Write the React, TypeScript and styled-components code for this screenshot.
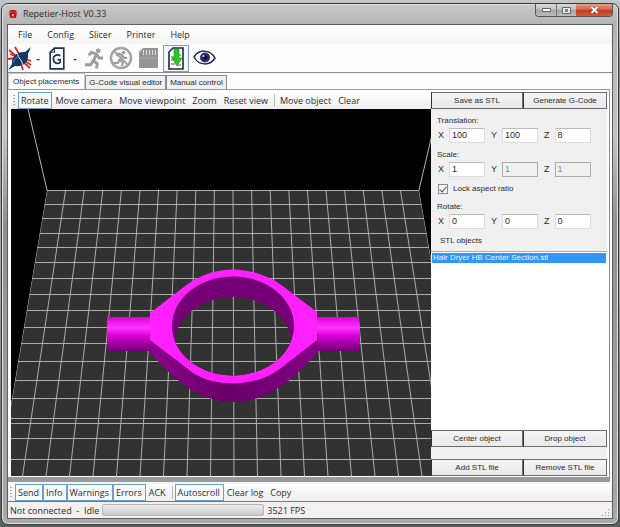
import React, { useState } from 'react';
import styled, { createGlobalStyle, css } from 'styled-components';

const uiFont = '"Open Sans", "Noto Sans", sans-serif';
const formFont = '"Liberation Sans", Arial, sans-serif';

const GlobalStyle = createGlobalStyle`
  *, *::before, *::after { box-sizing: border-box; }
  html { background: linear-gradient(#c3c7ca 0, #8c8c8c 60px, #aaaaaa 50%, #56605c 100%); }
  body { margin: 0; font-family: ${uiFont}; font-size: 10px; color: #2b2b2b; }
  button, input { font: inherit; color: inherit; margin: 0; }
`;

const Desktop = styled.div`
  min-height: 100vh;
  padding: 3px 1px 2px;
  display: flex;
`;

const Window = styled.div`
  flex: 1;
  min-width: 0;
  display: flex;
  flex-direction: column;
  border: 1px solid #3a3a3a;
  border-radius: 7px;
  padding: 0 5px 5px;
  box-shadow: inset 0 0 0 1px #e2e2e2;
  background: linear-gradient(#c9c9c9 0, #b3b3b3 22px, #c4c4c4 130px, #8f8f8f 220px, #a9a9a9 100%);
`;

const TitleBar = styled.header`
  display: flex;
  align-items: flex-start;
  height: 20px;
`;

const Title = styled.h1`
  flex: 1;
  display: flex;
  align-items: center;
  gap: 5px;
  margin: 0;
  padding-left: 1px;
  height: 19px;
  font-size: 9px;
  font-weight: 400;
  color: #2b2b2b;
`;

const Caption = styled.div`
  display: flex;
  border: 1px solid #555;
  border-top: 0;
  border-radius: 0 0 4px 4px;
  overflow: hidden;
`;

const CaptionButton = styled.button<{ $close?: boolean }>`
  display: flex;
  align-items: center;
  justify-content: center;
  width: ${p => (p.$close ? 36 : 20)}px;
  height: 12px;
  padding: 0;
  border: 0;
  border-left: ${p => (p.$close ? '0' : '1px solid #777')};
  background: ${p =>
    p.$close
      ? 'linear-gradient(#e2a08e 0, #d4664b 45%, #bd3a1c 50%, #d9593a 100%)'
      : 'linear-gradient(#d8d8d8 0, #c0c0c0 45%, #a4a4a4 50%, #bcbcbc 100%)'};
  &:first-child { border-left: 0; }
`;

const Client = styled.div`
  flex: 1;
  display: flex;
  flex-direction: column;
  border: 1px solid #5e5e5e;
  background: #fdfdfd;
`;

const MenuBar = styled.nav`
  display: flex;
  height: 19px;
  gap: 15px;
  padding-left: 10px;
  background: linear-gradient(#fefefe, #f5f5f5);
`;

const MenuItem = styled.button`
  padding: 0;
  border: 0;
  background: none;
  font-size: 9px;
  line-height: 19px;
`;

const ToolBar = styled.div`
  display: flex;
  align-items: center;
  height: 29px;
  gap: 3px;
  border-bottom: 1px solid #8a8a8a;
`;

const ToolButton = styled.button<{ $active?: boolean }>`
  display: flex;
  align-items: center;
  justify-content: center;
  width: ${p => (p.$active ? 26 : 24)}px;
  height: 27px;
  padding: 0;
  background: ${p => (p.$active ? '#f1f6fa' : 'none')};
  border: ${p => (p.$active ? '1px solid #7da2b5' : '0')};
`;

const ToolGroup = styled.div`
  display: flex;
  align-items: center;
  width: 34px;
`;

const DropMark = styled.button`
  width: 10px;
  height: 20px;
  padding: 0 0 0 2px;
  border: 0;
  background: none;
  font-weight: 700;
  line-height: 18px;
`;

const TabStrip = styled.div`
  display: flex;
  align-items: flex-end;
  height: 16px;
`;

const Tab = styled.button<{ $active?: boolean }>`
  height: ${p => (p.$active ? 16 : 14)}px;
  padding: 0 3px;
  font-family: ${formFont};
  font-size: 8px;
  line-height: ${p => (p.$active ? 15 : 13)}px;
  white-space: nowrap;
  background: ${p => (p.$active ? '#fdfdfd' : '#f0f0f0')};
  border: 1px solid ${p => (p.$active ? '#c9c9c9' : '#8c8c8c')};
  border-bottom: 0;
  ${p => p.$active && css`padding: 0 5px 0 4px;`}
`;

const TabPage = styled.main`
  flex: 1;
  display: flex;
  margin-right: 2px;
  padding: 2px 2px 1px 3px;
  border-top: 1px solid #9b9b9b;
  border-right: 1px solid #8c8c8c;
  border-bottom: 5px solid #999;
`;

const Stage = styled.section`
  flex: 1;
  min-width: 0;
  display: flex;
  flex-direction: column;
`;

const Strip = styled.div`
  display: flex;
  align-items: center;
  background: linear-gradient(#fdfdfd, #efefef);
`;

const ViewStrip = styled(Strip)`
  height: 17px;
`;

const LogStrip = styled(Strip)`
  height: 20px;
  border-top: 2px solid #f4f4f4;
  border-bottom: 1px solid #777;
`;

const Grip = styled.span`
  width: 2px;
  height: 11px;
  margin: 0 3px 0 2px;
  background: repeating-linear-gradient(#aaa 0 1px, transparent 1px 3px);
`;

const StripButton = styled.button<{ $pressed?: boolean }>`
  height: 17px;
  padding: 0 3px 0 2px;
  border: 1px solid ${p => (p.$pressed ? '#6f9fc6' : 'transparent')};
  background: ${p => (p.$pressed ? '#f5f9fc' : 'none')};
  font-size: 9px;
  line-height: 14px;
  white-space: nowrap;
`;

const Divider = styled.span`
  width: 1px;
  height: 13px;
  margin: 0 2px;
  background: #b5b5b5;
`;

const Scene = styled.div`
  flex: 1 1 0;
  min-height: 0;
  display: flex;
  background: #000;
  svg { flex: 1; width: 100%; height: 100%; min-height: 0; display: block; }
`;

const Side = styled.aside`
  width: 176px;
  display: flex;
  flex-direction: column;
  background: #f0f0f0;
  font-family: ${formFont};
  font-size: 8px;
`;

const ButtonPair = styled.div`
  display: grid;
  grid-template-columns: 92px 1fr;
  height: 17px;
`;

const PushButton = styled.button`
  padding: 0;
  border: 1px solid #6c6c6c;
  border-left-color: #333;
  background: linear-gradient(#f4f4f4, #e9e9e9);
  line-height: 15px;
`;

const Fields = styled.div`
  padding: 6px 0 0 6px;
`;

const Group = styled.fieldset`
  margin: 0 0 6px;
  padding: 0;
  border: 0;
  min-width: 0;
`;

const Legend = styled.legend`
  padding: 0;
  line-height: 12px;
  height: 13px;
`;

const AxisRow = styled.div`
  display: flex;
  gap: 5px;
`;

const Axis = styled.label`
  display: flex;
  align-items: center;
  gap: 5px;
  width: 48px;
  padding-left: 1px;
  font-size: 9px;
  line-height: 15px;
`;

const NumberBox = styled.input`
  flex: 1;
  min-width: 0;
  height: 15px;
  padding: 0 2px;
  border: 1px solid #dcdcdc;
  border-top-color: #bbb;
  background: #fff;
  &:disabled { background: #f0f0f0; border-color: #aaa; color: #8a8a8a; }
`;

const Check = styled.label`
  display: flex;
  align-items: center;
  gap: 5px;
  height: 11px;
  margin: 0 0 7px 1px;
`;

const TickBox = styled.input`
  appearance: none;
  display: grid;
  place-items: center;
  width: 10px;
  height: 10px;
  border: 1px solid #888;
  background: #f6f6f6;
  &:checked::before {
    content: '';
    width: 4px;
    height: 7px;
    border: solid #3b4a77;
    border-width: 0 1px 1px 0;
    transform: rotate(40deg);
  }
`;

const ListTitle = styled.h2`
  margin: 0 0 4px 9px;
  font-size: 8px;
  font-weight: 400;
  line-height: 12px;
`;

const ListBox = styled.ul`
  flex: 1;
  margin: 0;
  padding: 1px;
  list-style: none;
  background: #fff;
  border-top: 1px solid #aaa;
`;

const ListItem = styled.li`
  height: 10px;
  line-height: 10px;
  padding-left: 1px;
  background: #3296f8;
  color: #e9f4ff;
`;

const Spacer = styled.div`
  height: 12px;
`;

const StatusBar = styled.footer`
  display: flex;
  align-items: center;
  height: 16px;
  padding: 0 2px;
  gap: 3px;
  background: #f2f0f0;
  font-size: 9px;
  white-space: pre;
`;

const Progress = styled.div`
  width: 162px;
  height: 12px;
  border: 1px solid #b5b5b5;
  border-radius: 2px;
  background: linear-gradient(#ededed, #c9c9c9);
`;

const Corner = styled.svg`
  margin: 4px 0 0 auto;
`;

const LogoIcon = () => (
  <svg width="10" height="10" viewBox="0 0 10 10">
    <path d="M2 1h6l1 3-1 5H2L1 4z" fill="#d92c2c" />
    <path d="M3 3l2-2 2 2M2 6l3-2 3 2M3 9V6m4 3V6" stroke="#8c1515" fill="none" />
    <path d="M4 5h2v2H4z" fill="#f7a5a5" />
  </svg>
);

const ConnectIcon = () => (
  <svg width="24" height="25" viewBox="0 0 24 25">
    <path d="M1 4l7 6M7 1l4 7M0 13l7-1M15 16l7 6M13 18l2 6M17 13l6 2M2 8l5 2M17 15l6 4" stroke="#cf2c22" strokeWidth="1.800" />
    <path d="M0 24l4-6c-1-7 5-13 13-12l6-5-3 7c1 8-5 13-13 12z" fill="#143764" />
    <path d="M9 7l2 5 2 2 2 5" stroke="#dbe7f5" fill="none" />
    <path d="M5 17c1-4 3-6 6-7" stroke="#4470a6" fill="none" strokeWidth="1.200" />
  </svg>
);

const GCodeIcon = () => (
  <svg width="16" height="23" viewBox="0 0 15 22">
    <path d="M5 1h9v20H1V5z" fill="#fff" stroke="#1d3256" strokeWidth="1.600" />
    <path d="M5 1v4H1" fill="none" stroke="#1d3256" />
    <path d="M10.500 8.500C9 7 4 7 4 11.500s5 5 6.500 3V12H8" fill="none" stroke="#1d3256" strokeWidth="1.600" />
  </svg>
);

const Runner = () => (
  <>
    <circle cx="16" cy="3.500" r="2.500" fill="#9c9c9c" />
    <path d="M6 8l3-3 5 2-3 7 4 3-1 5M11 13l-3 5H2M14 7l3 4h4" fill="none" stroke="#9c9c9c" strokeWidth="3" strokeLinejoin="round" />
  </>
);

const RunIcon = () => (
  <svg width="22" height="23" viewBox="0 0 23 23"><Runner /></svg>
);

const KillIcon = () => (
  <svg width="24" height="24" viewBox="0 0 24 24">
    <circle cx="12" cy="12" r="10" fill="none" stroke="#a3a3a3" strokeWidth="2.500" />
    <g transform="translate(3 4) scale(.72)"><Runner /></g>
    <path d="M5 5l14 14" stroke="#a3a3a3" strokeWidth="2" />
  </svg>
);

const CardIcon = () => (
  <svg width="21" height="22" viewBox="0 0 21 22">
    <path d="M5 1h15v20H1V5z" fill="#959595" />
    <path d="M5.500 3v5M8.500 3v5M11.500 3v5M14.500 3v5M17.500 3v5" stroke="#dedede" />
    <path d="M2 11h17" stroke="#aaa" />
  </svg>
);

const LogIcon = () => (
  <svg width="16" height="23" viewBox="0 0 16 23">
    <path d="M5 1h10v21H1V5z" fill="#fff" stroke="#1f2c3c" strokeWidth="1.600" />
    <path d="M3 10h3M3 13h2M3 17h4M10 18h3M11 8h2" stroke="#555" />
    <path d="M6 2h5v9h3l-5 8-5-8h2z" fill="#2cc32c" stroke="#159515" strokeWidth=".6" />
  </svg>
);

const EyeIcon = () => (
  <svg width="23" height="18" viewBox="0 0 23 18">
    <path d="M1 8C6 0 17 0 22 9 17 17 6 17 1 8z" fill="#fff" stroke="#23284c" strokeWidth="1.500" />
    <circle cx="12" cy="8.500" r="5" fill="#2a2f75" />
    <circle cx="12" cy="8.500" r="2.400" fill="#0e1230" />
    <circle cx="10.500" cy="7" r="1" fill="#dfe6ff" />
  </svg>
);

const rowYs = [81, 95, 109, 124, 138, 153, 169, 185, 201, 218, 234, 252, 271, 289, 309, 314, 329, 350];
const columns = Array.from({ length: 21 }, (_, i) => i - 10);

const PrintBed = () => (
  <svg viewBox="0 0 420 367" preserveAspectRatio="xMidYMid slice" role="img" aria-label="Print bed with object">
    <defs>
      <linearGradient id="tube" x1="0" y1="0" x2="0" y2="1">
        <stop offset="0" stopColor="#dc00dc" />
        <stop offset=".32" stopColor="#ff35ff" />
        <stop offset=".55" stopColor="#d800d8" />
        <stop offset="1" stopColor="#710071" />
      </linearGradient>
      <linearGradient id="wall" x1="0" y1="0" x2="1" y2="0">
        <stop offset="0" stopColor="#8d008d" />
        <stop offset=".45" stopColor="#680068" />
        <stop offset="1" stopColor="#850085" />
      </linearGradient>
      <clipPath id="floor"><path d="M36 81H408L458 367H-12z" /></clipPath>
      <clipPath id="bore"><ellipse cx="222" cy="217" rx="61" ry="49.500" /></clipPath>
      <mask id="through">
        <path fill="#fff" d="M0 0h420v367H0z" />
        <g clipPath="url(#bore)"><ellipse cx="222" cy="237" rx="59" ry="49" fill="#000" /></g>
      </mask>
    </defs>
    <path d="M0 0h420v367H0z" fill="#000" />
    <path d="M36 81H408L458 367H-12z" fill="#323232" />
    <path d="M17 0L36 81M427 0L408 81" stroke="#b4b4b4" />
    <g stroke="#adadad" clipPath="url(#floor)">
      {rowYs.map(y => <path key={y} d={`M0 ${y + 0.5}H420`} />)}
      {columns.map(i => <path key={i} d={`M${222 + i * 18.6} 81L${223 + i * 23.5} 367`} />)}
    </g>
    <g mask="url(#through)">
      <path d="M96 209q0-1 2-1h45v34H97q-2-17-1-33z" fill="url(#tube)" />
      <path d="M300 208h48q2 17 0 34h-48z" fill="url(#tube)" />
      <path d="M139 225V243C157 264 184 293 222 293s64-27 85-50V225z" fill="url(#wall)" />
      <path d="M139 204L174 177C187 167 204 160.500 222 160.500s36 6.500 49 16L306 203V231L270 259C257 269 240 274.500 222 274.500S187 269 177 260L139 231z" fill="#ff20ff" />
      <ellipse cx="222" cy="217" rx="61" ry="49.500" fill="#750075" />
    </g>
  </svg>
);

const AxisInputs = ({ group, values, locked }: { group: string; values: string[]; locked?: boolean }) => (
  <AxisRow>
    {['X', 'Y', 'Z'].map((axis, i) => (
      <Axis key={axis}>
        {axis}
        <NumberBox name={`${group}-${axis}`} defaultValue={values[i]} disabled={locked && i > 0} />
      </Axis>
    ))}
  </AxisRow>
);

export default function App() {
  const [locked, setLocked] = useState(true);
  return (
    <>
      <GlobalStyle />
      <Desktop>
        <Window>
          <TitleBar>
            <Title><LogoIcon />Repetier-Host V0.33</Title>
            <Caption>
              <CaptionButton aria-label="Minimize">
                <svg width="11" height="6"><path d="M1.500 1.500h8v3h-8z" fill="#fff" stroke="#666" /></svg>
              </CaptionButton>
              <CaptionButton aria-label="Maximize">
                <svg width="11" height="9"><path d="M1.500 1.500h8v6h-8z" fill="#eee" stroke="#666" /><path d="M4.500 3.500h2v2h-2z" fill="#bbb" stroke="#666" /></svg>
              </CaptionButton>
              <CaptionButton $close aria-label="Close">
                <svg width="9" height="8"><path d="M1.500 1l6 6M7.500 1l-6 6" stroke="#7a3326" strokeWidth="3" /><path d="M1.500 1l6 6M7.500 1l-6 6" stroke="#fff" strokeWidth="2" /></svg>
              </CaptionButton>
            </Caption>
          </TitleBar>
          <Client>
            <MenuBar>
              {['File', 'Config', 'Slicer', 'Printer', 'Help'].map(m => <MenuItem key={m}>{m}</MenuItem>)}
            </MenuBar>
            <ToolBar>
              <ToolGroup>
                <ToolButton aria-label="Connect"><ConnectIcon /></ToolButton>
                <DropMark aria-label="Connect options">-</DropMark>
              </ToolGroup>
              <ToolGroup>
                <ToolButton aria-label="Load G-Code"><GCodeIcon /></ToolButton>
                <DropMark aria-label="Load options">-</DropMark>
              </ToolGroup>
              <ToolButton aria-label="Run job"><RunIcon /></ToolButton>
              <ToolButton aria-label="Kill job"><KillIcon /></ToolButton>
              <ToolButton aria-label="SD card"><CardIcon /></ToolButton>
              <ToolButton $active aria-label="Toggle log"><LogIcon /></ToolButton>
              <ToolButton aria-label="Show filament"><EyeIcon /></ToolButton>
            </ToolBar>
            <TabStrip role="tablist">
              <Tab $active role="tab" aria-selected="true">Object placements</Tab>
              <Tab role="tab">G-Code visual editor</Tab>
              <Tab role="tab">Manual control</Tab>
            </TabStrip>
            <TabPage>
              <Stage>
                <ViewStrip>
                  <Grip />
                  <StripButton $pressed>Rotate</StripButton>
                  <StripButton>Move camera</StripButton>
                  <StripButton>Move viewpoint</StripButton>
                  <StripButton>Zoom</StripButton>
                  <StripButton>Reset view</StripButton>
                  <Divider />
                  <StripButton>Move object</StripButton>
                  <StripButton>Clear</StripButton>
                </ViewStrip>
                <Scene><PrintBed /></Scene>
              </Stage>
              <Side>
                <ButtonPair>
                  <PushButton>Save as STL</PushButton>
                  <PushButton>Generate G-Code</PushButton>
                </ButtonPair>
                <Fields>
                  <Group>
                    <Legend>Translation:</Legend>
                    <AxisInputs group="translation" values={['100', '100', '8']} />
                  </Group>
                  <Group>
                    <Legend>Scale:</Legend>
                    <AxisInputs group="scale" values={['1', '1', '1']} locked={locked} />
                  </Group>
                  <Check>
                    <TickBox type="checkbox" checked={locked} onChange={e => setLocked(e.target.checked)} />
                    Lock aspect ratio
                  </Check>
                  <Group>
                    <Legend>Rotate:</Legend>
                    <AxisInputs group="rotate" values={['0', '0', '0']} />
                  </Group>
                </Fields>
                <ListTitle>STL objects</ListTitle>
                <ListBox role="listbox" aria-label="STL objects">
                  <ListItem role="option" aria-selected="true">Hair Dryer HB Center Section.stl</ListItem>
                </ListBox>
                <ButtonPair>
                  <PushButton>Center object</PushButton>
                  <PushButton>Drop object</PushButton>
                </ButtonPair>
                <Spacer />
                <ButtonPair>
                  <PushButton>Add STL file</PushButton>
                  <PushButton>Remove STL file</PushButton>
                </ButtonPair>
              </Side>
            </TabPage>
            <LogStrip>
              <Grip />
              <StripButton $pressed>Send</StripButton>
              <StripButton $pressed>Info</StripButton>
              <StripButton $pressed>Warnings</StripButton>
              <StripButton $pressed>Errors</StripButton>
              <StripButton>ACK</StripButton>
              <Divider />
              <StripButton $pressed>Autoscroll</StripButton>
              <StripButton>Clear log</StripButton>
              <StripButton>Copy</StripButton>
            </LogStrip>
            <StatusBar>
              <span>{'Not connected  -  Idle'}</span>
              <Progress role="progressbar" aria-label="Job progress" />
              <span>3521 FPS</span>
              <Corner width="9" height="9" viewBox="0 0 9 9">
                <path d="M7 1h1v1H7zM4 4h1v1H4zM7 4h1v1H7zM1 7h1v1H1zM4 7h1v1H4zM7 7h1v1H7z" fill="#999" />
              </Corner>
            </StatusBar>
          </Client>
        </Window>
      </Desktop>
    </>
  );
}
